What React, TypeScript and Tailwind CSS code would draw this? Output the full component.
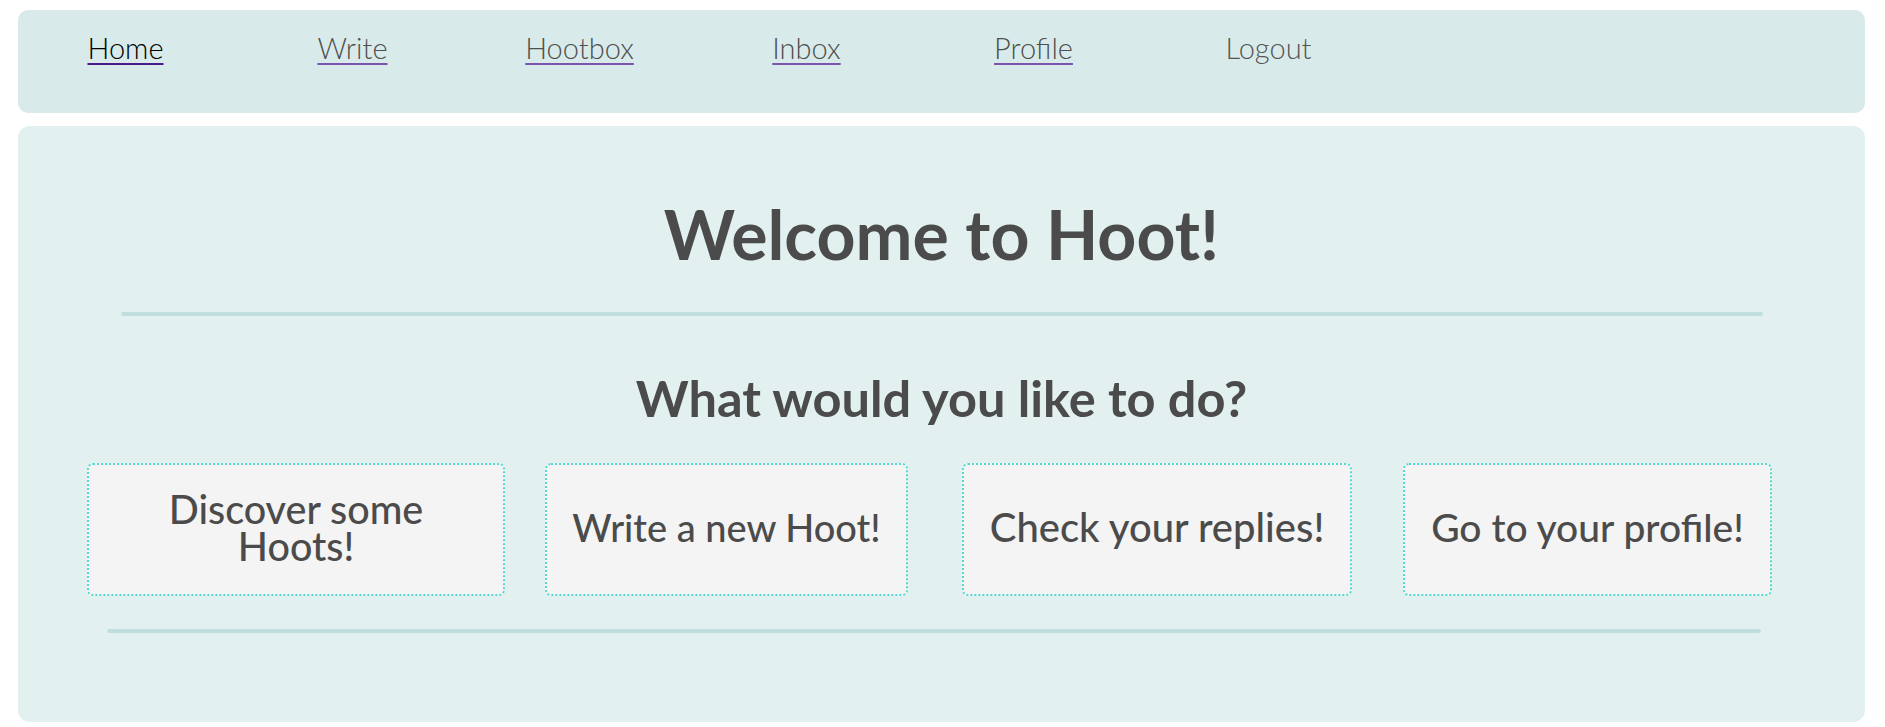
import React from "react";

const links = [
  { label: "Home", cls: "text-black decoration-[#4c1a8c]" },
  { label: "Write", cls: "text-[#4f4f4f] decoration-[#7b55ad]" },
  { label: "Hootbox", cls: "text-[#4f4f4f] decoration-[#7b55ad]" },
  { label: "Inbox", cls: "text-[#4f4f4f] decoration-[#7b55ad]" },
  { label: "Profile", cls: "text-[#4f4f4f] decoration-[#7b55ad]" },
];

const btn =
  "rounded-[6px] border-2 border-dotted border-[#52d9d3] bg-[#f4f4f4] pt-[25px] pb-[30px] font-medium leading-[37px] text-[#4b4b4b]";

export default function App() {
  return (
    <div className="min-h-screen bg-white pl-[18px] pr-[20px] pt-[10px] font-['Lato',sans-serif] text-[#4b4b4b]">
      <nav className="h-[103px] rounded-[10px] bg-[#d8ebea]">
        <ul className="flex -ml-[6px] pt-[21px]">
          {links.map((l) => (
            <li key={l.label} className="w-[227px] text-center">
              <a
                href="#"
                className={`text-[29px] font-light leading-[34px] underline decoration-2 underline-offset-[4px] ${l.cls}`}
              >
                {l.label}
              </a>
            </li>
          ))}
          <li className="w-[227px] text-center">
            <span className="pl-[16px] text-[29px] font-light leading-[34px] text-[#555555]">Logout</span>
          </li>
        </ul>
      </nav>

      <main className="mt-[13px] h-[596px] rounded-[12px] bg-[#e2f0f0] pt-[66px]">
        <h1 className="text-center text-[68px] font-bold leading-[84px] text-[#4b4b4b]">Welcome to Hoot!</h1>
        <div className="mx-auto mt-[36px] h-[4px] w-[1642px] rounded-full bg-[#bfdfdf]" />
        <h2 className="mt-[52px] text-center text-[50.5px] font-bold leading-[60px] text-[#4b4b4b]">
          What would you like to do?
        </h2>
        <div className="mt-[35px] flex pl-[69px]">
          <button className={`w-[418px] px-[29px] text-[39.5px] ${btn}`}>Discover some Hoots!</button>
          <button className={`ml-[40px] w-[363px] px-[20px] text-[38px] ${btn}`}>Write a new Hoot!</button>
          <button className={`ml-[54px] w-[390px] px-[10px] text-[40px] ${btn}`}>Check your replies!</button>
          <button className={`ml-[51px] w-[369px] px-[20px] text-[39px] ${btn}`}>Go to your profile!</button>
        </div>
        <div className="ml-[89px] mt-[33px] h-[4px] w-[1654px] rounded-full bg-[#bfdfdf]" />
      </main>
    </div>
  );
}
